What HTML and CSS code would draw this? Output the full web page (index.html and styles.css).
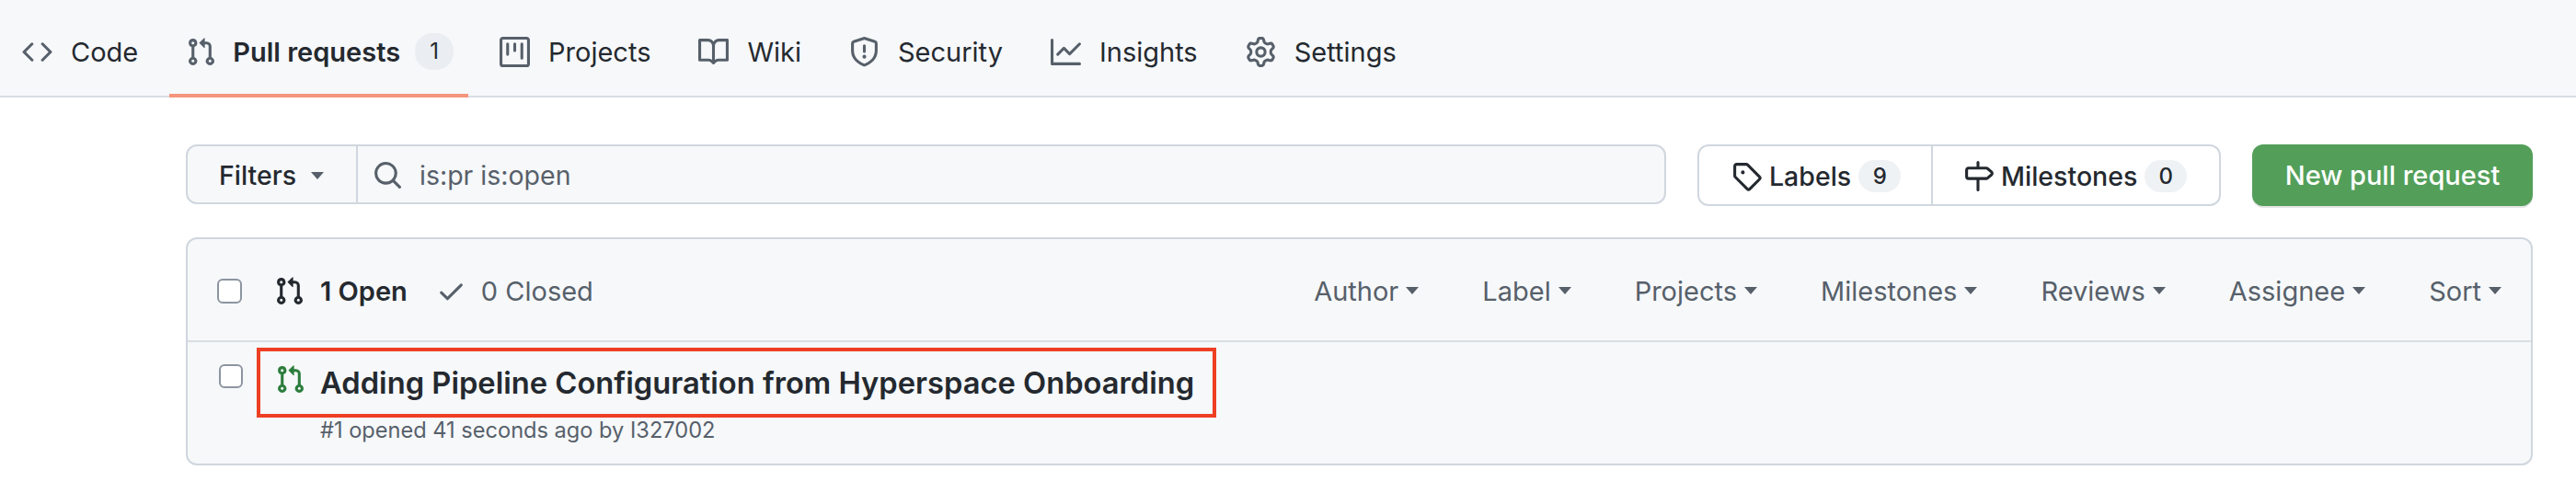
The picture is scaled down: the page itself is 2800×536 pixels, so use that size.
FILE: index.html
```html
<!DOCTYPE html>
<html lang="en">
<head>
    <meta charset="UTF-8">
    <meta name="viewport" content="width=device-width, initial-scale=1.0">
    <title>Pull requests</title>
    <link rel="stylesheet" href="styles.css">
</head>
<body>
    <svg class="icon-defs" aria-hidden="true">
        <symbol id="i-code" viewBox="0 0 16 16"><path d="m11.28 3.22 4.25 4.25a.75.75 0 0 1 0 1.06l-4.25 4.25a.749.749 0 0 1-1.275-.326.749.749 0 0 1 .215-.734L13.94 8l-3.72-3.72a.749.749 0 0 1 .326-1.275.749.749 0 0 1 .734.215Zm-6.56 0a.751.751 0 0 1 1.042.018.751.751 0 0 1 .018 1.042L2.06 8l3.72 3.72a.749.749 0 0 1-.326 1.275.749.749 0 0 1-.734-.215L.47 8.53a.75.75 0 0 1 0-1.06Z"/></symbol>
        <symbol id="i-pr" viewBox="0 0 16 16"><path d="M1.5 3.25a2.25 2.25 0 1 1 3 2.122v5.256a2.251 2.251 0 1 1-1.5 0V5.372A2.25 2.25 0 0 1 1.5 3.25Zm5.677-.177L9.573.677A.25.25 0 0 1 10 .854V2.5h1A2.5 2.5 0 0 1 13.5 5v5.628a2.251 2.251 0 1 1-1.5 0V5a1 1 0 0 0-1-1h-1v1.646a.25.25 0 0 1-.427.177L7.177 3.427a.25.25 0 0 1 0-.354ZM3.75 2.5a.75.75 0 1 0 0 1.5.75.75 0 0 0 0-1.5Zm0 9.5a.75.75 0 1 0 0 1.5.75.75 0 0 0 0-1.5Zm8.25.75a.75.75 0 1 0 1.5 0 .75.75 0 0 0-1.5 0Z"/></symbol>
        <symbol id="i-project" viewBox="0 0 16 16"><path d="M1.75 0h12.5C15.216 0 16 .784 16 1.75v12.5A1.75 1.75 0 0 1 14.25 16H1.75A1.75 1.75 0 0 1 0 14.25V1.75C0 .784.784 0 1.75 0ZM1.5 1.75v12.5c0 .138.112.25.25.25h12.5a.25.25 0 0 0 .25-.25V1.75a.25.25 0 0 0-.25-.25H1.75a.25.25 0 0 0-.25.25ZM11.75 3a.75.75 0 0 1 .75.75v7.5a.75.75 0 0 1-1.5 0v-7.5a.75.75 0 0 1 .75-.75Zm-8.25.75a.75.75 0 0 1 1.5 0v5.5a.75.75 0 0 1-1.5 0ZM8 3a.75.75 0 0 1 .75.75v3.5a.75.75 0 0 1-1.5 0v-3.5A.75.75 0 0 1 8 3Z"/></symbol>
        <symbol id="i-book" viewBox="0 0 16 16"><path d="M0 1.75A.75.75 0 0 1 .75 1h4.253c1.227 0 2.317.59 3 1.501A3.743 3.743 0 0 1 11.006 1h4.245a.75.75 0 0 1 .75.75v10.5a.75.75 0 0 1-.75.75h-4.507a2.25 2.25 0 0 0-1.591.659l-.622.621a.75.75 0 0 1-1.06 0l-.622-.621A2.25 2.25 0 0 0 5.258 13H.75a.75.75 0 0 1-.75-.75Zm7.251 10.324.004-5.073-.002-2.253A2.25 2.25 0 0 0 5.003 2.5H1.5v9h3.757a3.75 3.75 0 0 1 1.994.574ZM8.755 4.75l-.004 7.322a3.752 3.752 0 0 1 1.992-.572H14.5v-9h-3.495a2.25 2.25 0 0 0-2.25 2.25Z"/></symbol>
        <symbol id="i-shield" viewBox="0 0 16 16"><path d="M7.467.133a1.748 1.748 0 0 1 1.066 0l5.25 1.68A1.75 1.75 0 0 1 15 3.48V7c0 1.566-.32 3.182-1.303 4.682-.983 1.498-2.585 2.813-5.032 3.855a1.697 1.697 0 0 1-1.33 0c-2.447-1.042-4.049-2.357-5.032-3.855C1.32 10.182 1 8.566 1 7V3.48a1.75 1.75 0 0 1 1.217-1.667Zm.61 1.429a.25.25 0 0 0-.153 0l-5.25 1.68a.25.25 0 0 0-.174.238V7c0 1.358.275 2.666 1.057 3.86.784 1.194 2.121 2.34 4.366 3.297a.196.196 0 0 0 .154 0c2.245-.956 3.582-2.104 4.366-3.298C13.225 9.666 13.5 8.36 13.5 7V3.48a.251.251 0 0 0-.174-.237l-5.25-1.68ZM8.75 4.75v3a.75.75 0 0 1-1.5 0v-3a.75.75 0 0 1 1.5 0ZM9 10.5a1 1 0 1 1-2 0 1 1 0 0 1 2 0Z"/></symbol>
        <symbol id="i-graph" viewBox="0 0 16 16"><path d="M1.5 1.75V13.5h13.75a.75.75 0 0 1 0 1.5H.75a.75.75 0 0 1-.75-.75V1.75a.75.75 0 0 1 1.5 0Zm14.28 2.53-5.25 5.25a.75.75 0 0 1-1.06 0L7 7.06 4.28 9.78a.751.751 0 0 1-1.042-.018.751.751 0 0 1-.018-1.042l3.25-3.25a.75.75 0 0 1 1.06 0L10 7.94l4.72-4.72a.751.751 0 0 1 1.042.018.751.751 0 0 1 .018 1.042Z"/></symbol>
        <symbol id="i-gear" viewBox="0 0 16 16"><path d="M8 0a8.2 8.2 0 0 1 .701.031C9.444.095 9.99.645 10.16 1.29l.288 1.107c.018.066.079.158.212.224.231.114.454.243.668.386.123.082.233.09.299.071l1.103-.303c.644-.176 1.392.021 1.82.63.27.385.506.792.704 1.218.315.675.111 1.422-.364 1.891l-.814.806c-.049.048-.098.147-.088.294.016.257.016.515 0 .772-.01.147.038.246.088.294l.814.806c.475.469.679 1.216.364 1.891a7.977 7.977 0 0 1-.704 1.217c-.428.61-1.176.807-1.82.63l-1.102-.302c-.067-.019-.177-.011-.3.071a5.909 5.909 0 0 1-.668.386c-.133.066-.194.158-.211.224l-.29 1.106c-.168.646-.715 1.196-1.458 1.26a8.006 8.006 0 0 1-1.402 0c-.743-.064-1.289-.614-1.458-1.26l-.289-1.106c-.018-.066-.079-.158-.212-.224a5.738 5.738 0 0 1-.668-.386c-.123-.082-.233-.09-.299-.071l-1.103.303c-.644.176-1.392-.021-1.82-.63a8.12 8.12 0 0 1-.704-1.218c-.315-.675-.111-1.422.363-1.891l.815-.806c.05-.048.098-.147.088-.294a6.214 6.214 0 0 1 0-.772c.01-.147-.038-.246-.088-.294l-.815-.806C.635 6.045.431 5.298.746 4.623a7.92 7.92 0 0 1 .704-1.217c.428-.61 1.176-.807 1.82-.63l1.102.302c.067.019.177.011.3-.071.214-.143.437-.272.668-.386.133-.066.194-.158.211-.224l.29-1.106C6.009.645 6.556.095 7.299.03 7.53.01 7.764 0 8 0Zm-.571 1.525c-.036.003-.108.036-.137.146l-.289 1.105c-.147.561-.549.967-.998 1.189-.173.086-.34.183-.5.29-.417.278-.97.423-1.529.27l-1.103-.303c-.109-.03-.175.016-.195.045-.22.312-.412.644-.573.99-.014.031-.021.11.059.19l.815.806c.411.406.562.957.53 1.456a4.709 4.709 0 0 0 0 .582c.032.499-.119 1.05-.53 1.456l-.815.806c-.081.08-.073.159-.059.19.162.346.353.677.573.989.02.03.085.076.195.046l1.102-.303c.56-.153 1.113-.008 1.53.27.161.107.328.204.501.29.447.222.85.629.997 1.189l.289 1.105c.029.109.101.143.137.146a6.6 6.6 0 0 0 1.142 0c.036-.003.108-.036.137-.146l.289-1.105c.147-.561.549-.967.998-1.189.173-.086.34-.183.5-.29.417-.278.97-.423 1.529-.27l1.103.303c.109.029.175-.016.195-.045.22-.313.411-.644.573-.99.014-.031.021-.11-.059-.19l-.815-.806c-.411-.406-.562-.957-.53-1.456a4.709 4.709 0 0 0 0-.582c-.032-.499.119-1.05.53-1.456l.815-.806c.081-.08.073-.159.059-.19a6.464 6.464 0 0 0-.573-.989c-.02-.03-.085-.076-.195-.046l-1.102.303c-.56.153-1.113.008-1.53-.27a4.44 4.44 0 0 0-.501-.29c-.447-.222-.85-.629-.997-1.189l-.289-1.105c-.029-.11-.101-.143-.137-.146a6.6 6.6 0 0 0-1.142 0ZM11 8a3 3 0 1 1-6 0 3 3 0 0 1 6 0ZM9.5 8a1.5 1.5 0 1 0-3.001.001A1.5 1.5 0 0 0 9.5 8Z"/></symbol>
        <symbol id="i-search" viewBox="0 0 16 16"><path d="M10.68 11.74a6 6 0 0 1-7.922-8.982 6 6 0 0 1 8.982 7.922l3.04 3.04a.749.749 0 0 1-.326 1.275.749.749 0 0 1-.734-.215ZM11.5 7a4.499 4.499 0 1 0-8.997 0A4.499 4.499 0 0 0 11.5 7Z"/></symbol>
        <symbol id="i-check" viewBox="0 0 16 16"><path d="M13.78 4.22a.75.75 0 0 1 0 1.06l-7.25 7.25a.75.75 0 0 1-1.06 0L2.22 9.28a.751.751 0 0 1 .018-1.042.751.751 0 0 1 1.042-.018L6 10.94l6.72-6.72a.75.75 0 0 1 1.06 0Z"/></symbol>
        <symbol id="i-tag" viewBox="0 0 16 16"><path d="M1 7.775V2.75C1 1.784 1.784 1 2.75 1h5.025c.464 0 .91.184 1.238.513l6.25 6.25a1.75 1.75 0 0 1 0 2.474l-5.026 5.026a1.75 1.75 0 0 1-2.474 0l-6.25-6.25A1.752 1.752 0 0 1 1 7.775Zm1.5 0c0 .066.026.13.073.177l6.25 6.25a.25.25 0 0 0 .354 0l5.025-5.025a.25.25 0 0 0 0-.354l-6.25-6.25a.25.25 0 0 0-.177-.073H2.75a.25.25 0 0 0-.25.25ZM6 5a1 1 0 1 1 0 2 1 1 0 0 1 0-2Z"/></symbol>
        <symbol id="i-milestone" viewBox="0 0 16 16"><path d="M7.75 0a.75.75 0 0 1 .75.75V3h3.634c.414 0 .814.147 1.13.414l2.07 1.75a1.75 1.75 0 0 1 0 2.672l-2.07 1.75a1.75 1.75 0 0 1-1.13.414H8.5v5.25a.75.75 0 0 1-1.5 0V10H2.75A1.75 1.75 0 0 1 1 8.25v-3.5C1 3.784 1.784 3 2.75 3H7V.75A.75.75 0 0 1 7.75 0Zm4.384 8.5a.25.25 0 0 0 .161-.06l2.07-1.75a.248.248 0 0 0 0-.38l-2.07-1.75a.25.25 0 0 0-.161-.06H2.75a.25.25 0 0 0-.25.25v3.5c0 .138.112.25.25.25h9.384Z"/></symbol>
    </svg>

    <nav class="repo-nav">
        <a class="tab"><svg class="icon"><use href="#i-code"/></svg><span>Code</span></a>
        <a class="tab selected"><svg class="icon"><use href="#i-pr"/></svg><span>Pull requests</span><span class="counter">1</span></a>
        <a class="tab"><svg class="icon"><use href="#i-project"/></svg><span>Projects</span></a>
        <a class="tab"><svg class="icon"><use href="#i-book"/></svg><span>Wiki</span></a>
        <a class="tab"><svg class="icon"><use href="#i-shield"/></svg><span>Security</span></a>
        <a class="tab"><svg class="icon"><use href="#i-graph"/></svg><span>Insights</span></a>
        <a class="tab"><svg class="icon"><use href="#i-gear"/></svg><span>Settings</span></a>
    </nav>

    <main class="content">
        <div class="toolbar">
            <div class="filter-group">
                <button class="filter-btn" type="button">Filters<span class="caret"></span></button>
                <div class="search">
                    <svg class="icon search-icon"><use href="#i-search"/></svg>
                    <span>is:pr is:open</span>
                </div>
            </div>
            <div class="link-group">
                <a class="link-item labels"><svg class="icon"><use href="#i-tag"/></svg><span>Labels</span><span class="counter">9</span></a>
                <a class="link-item milestones"><svg class="icon"><use href="#i-milestone"/></svg><span>Milestones</span><span class="counter">0</span></a>
            </div>
            <button class="new-pr" type="button">New pull request</button>
        </div>

        <section class="pr-box">
            <header class="box-header">
                <span class="checkbox"></span>
                <div class="states">
                    <a class="state open"><svg class="icon"><use href="#i-pr"/></svg>1 Open</a>
                    <a class="state closed"><svg class="icon"><use href="#i-check"/></svg>0 Closed</a>
                </div>
                <div class="sorts">
                    <a class="sort">Author<span class="caret"></span></a>
                    <a class="sort">Label<span class="caret"></span></a>
                    <a class="sort">Projects<span class="caret"></span></a>
                    <a class="sort">Milestones<span class="caret"></span></a>
                    <a class="sort">Reviews<span class="caret"></span></a>
                    <a class="sort">Assignee<span class="caret"></span></a>
                    <a class="sort">Sort<span class="caret"></span></a>
                </div>
            </header>
            <div class="pr-row">
                <span class="checkbox"></span>
                <svg class="icon pr-open"><use href="#i-pr"/></svg>
                <div class="pr-text">
                    <a class="pr-title">Adding Pipeline Configuration from Hyperspace Onboarding</a>
                    <div class="pr-meta">#1 opened 41 seconds ago by I327002</div>
                </div>
                <!-- red annotation box from the screenshot -->
                <div class="highlight"></div>
            </div>
        </section>
    </main>
</body>
</html>
```

FILE: styles.css
```css
* {
    box-sizing: border-box;
}

body {
    margin: 0;
    font-family: 'Inter', 'Liberation Sans', sans-serif;
    font-size: 29px;
    color: #24292f;
    background-color: #fff;
}

.icon-defs {
    display: none;
}

.icon {
    width: 33px;
    height: 33px;
    fill: #57606a;
    flex-shrink: 0;
}

.counter {
    display: inline-block;
    min-width: 44px;
    height: 38px;
    line-height: 38px;
    border-radius: 19px;
    text-align: center;
    font-size: 24px;
    font-weight: 500;
    background-color: #eaeef2;
}

.caret {
    display: inline-block;
    width: 0;
    height: 0;
    border-left: 7px solid transparent;
    border-right: 7px solid transparent;
    border-top: 8px solid currentColor;
}

/* repo tabs */
.repo-nav {
    display: flex;
    gap: 16px;
    height: 106px;
    padding-left: 6px;
    background-color: #f6f8fa;
    border-bottom: 2px solid #d8dee4;
}

.tab {
    display: flex;
    align-items: center;
    gap: 20px;
    height: 106px;
    padding: 10px 18px 0;
    border-bottom: 4px solid transparent;
}

.tab.selected {
    gap: 18px;
    padding-right: 16px;
    font-weight: 600;
    border-bottom-color: #f5957c;
}

.tab .counter {
    font-weight: 400;
    min-width: 42px;
    height: 40px;
    line-height: 40px;
    margin-left: -2px;
}

/* filters row */
.content {
    padding: 51px 47px 0 202px;
}

.toolbar {
    display: flex;
    align-items: flex-start;
    gap: 34px;
}

.filter-group {
    flex: 1;
    display: flex;
    height: 65px;
    font-size: 28.5px;
    background-color: #f6f8fa;
    border: 2px solid #d0d7de;
    border-radius: 12px;
}

.filter-btn {
    display: flex;
    align-items: center;
    gap: 16px;
    width: 185px;
    padding: 2px 0 0 34px;
    font: inherit;
    font-weight: 500;
    color: inherit;
    background: none;
    border: none;
    border-right: 2px solid #d0d7de;
}

.filter-btn .caret {
    color: #57606a;
}

.search {
    display: flex;
    align-items: center;
    gap: 18px;
    padding: 2px 0 0 16px;
    color: #57606a;
}

.link-group {
    display: flex;
    height: 67px;
    font-size: 28.5px;
    border: 2px solid #d0d7de;
    border-radius: 12px;
}

.link-item {
    display: flex;
    align-items: center;
    padding-top: 1px;
    font-weight: 500;
}

.link-item .icon {
    fill: #24292f;
}

.link-item .counter {
    height: 35px;
    line-height: 35px;
    min-width: 46px;
    background-color: #eff2f5;
}

.labels {
    width: 254px;
    gap: 8px;
    padding-left: 35px;
    border-right: 2px solid #d0d7de;
}

.milestones {
    width: 311px;
    gap: 8px;
    padding-left: 33px;
}

.new-pr {
    width: 305px;
    height: 67px;
    font: inherit;
    font-weight: 500;
    color: #fff;
    background-color: #539f5a;
    border: none;
    border-radius: 12px;
    box-shadow: 0 2px 0 rgba(27, 31, 36, 0.12);
}

/* pull request list */
.pr-box {
    margin-top: 34px;
    height: 248px;
    background-color: #f6f8fa;
    border: 2px solid #d0d7de;
    border-radius: 12px;
}

.checkbox {
    display: block;
    width: 26px;
    height: 26px;
    background-color: #fff;
    border: 2px solid #8c959f;
    border-radius: 6px;
}

.box-header {
    display: flex;
    align-items: center;
    height: 112px;
    padding: 2px 32px 0;
    border-bottom: 2px solid #d8dee4;
}

.box-header .checkbox {
    width: 27px;
    height: 27px;
}

.states {
    display: flex;
    align-items: center;
    gap: 31px;
    margin-left: 35px;
}

.state {
    display: flex;
    align-items: center;
}

.state.open {
    gap: 17px;
    font-weight: 600;
}

.state.open .icon {
    fill: #24292f;
}

.state.closed {
    gap: 16px;
    color: #57606a;
}

.sorts {
    display: flex;
    gap: 69px;
    margin-left: auto;
    color: #57606a;
}

.sort {
    display: flex;
    align-items: center;
    gap: 8px;
}

.pr-row {
    position: relative;
    display: flex;
    align-items: flex-start;
    height: 132px;
    padding: 24px 0 0 34px;
}

.pr-open {
    margin: 0 0 0 35px;
    fill: #2c7d3c;
}

.pr-text {
    margin: -2px 0 0 16px;
}

.pr-title {
    display: block;
    font-size: 32.7px;
    font-weight: 600;
    line-height: 44px;
}

.pr-meta {
    margin-top: 15px;
    font-size: 23.6px;
    line-height: 30px;
    color: #57606a;
}

.highlight {
    position: absolute;
    left: 75px;
    top: 6px;
    width: 1043px;
    height: 76px;
    border: 4px solid #ee3f24;
}
```
